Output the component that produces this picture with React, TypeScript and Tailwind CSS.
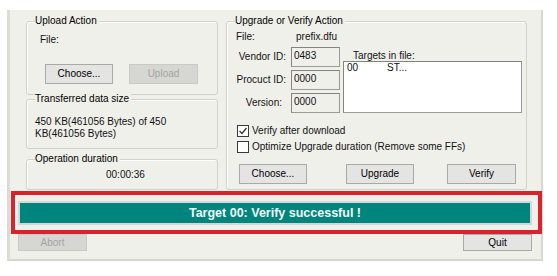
import React from "react";

function Group({ title, className, children }: { title: string; className: string; children?: React.ReactNode }) {
  return (
    <div className={"relative border border-[#d2d2c8] rounded-[3px] shadow-[inset_1px_1px_0_#ffffff] " + className}>
      <span className="absolute left-[8px] top-[-7px] bg-[#f0f0eb] pr-[2px] leading-[12px] text-black">{title}</span>
      {children}
    </div>
  );
}

function Btn({ label, w, disabled }: { label: string; w: string; disabled?: boolean }) {
  return (
    <div
      className={
        "flex items-center justify-center h-[20px] leading-[12px] border " +
        w +
        (disabled
          ? " bg-[#d6d6d3] border-[#c9c9c6] text-[#a4a4a4]"
          : " bg-[#e4e4e2] border-[#a9a9a7] text-black")
      }
    >
      {label}
    </div>
  );
}

function Field({ value }: { value: string }) {
  return (
    <div className="w-[49px] h-[20px] border border-[#9a9a96] border-t-[#848480] border-l-[#848480] bg-[#f0f0eb] pl-[2px] pt-[2px] leading-[12px]">
      {value}
    </div>
  );
}

function Check({ checked }: { checked?: boolean }) {
  return (
    <div className="w-[12px] h-[12px] border border-[#3a3a3a] bg-white flex items-center justify-center">
      {checked && (
        <svg width="10" height="10" viewBox="0 0 10 10">
          <polyline points="1.5,5 4,7.5 8.5,2" fill="none" stroke="#333" strokeWidth="1.3" />
        </svg>
      )}
    </div>
  );
}

export default function App() {
  return (
    <div className="w-[557px] h-[276px] bg-white overflow-hidden pt-[10px] font-['Liberation_Sans',Arial,sans-serif] text-[10px] text-[#111]">
      <div className="relative ml-[7px] w-[536px] h-[251px] bg-[#f0f0eb] border-l-[3px] border-l-[#dcdcd4] border-r-[2px] border-r-[#d8d8d0] border-b-[2px] border-b-[#d6d6ce] pt-[11px] pl-[8px] pr-[9px] pb-[8px]">
        <div className="flex ml-[8px] gap-[8px] h-[169px]">
          <div className="flex flex-col w-[192px]">
            <Group title="Upload Action" className="h-[74px]">
              <div className="pt-[12px] pl-[13px] leading-[12px]">File:</div>
              <div className="mt-[18px] ml-[18px] flex gap-[16px]">
                <Btn label="Choose..." w="w-[68px]" />
                <Btn label="Upload" w="w-[69px]" disabled />
              </div>
            </Group>
            <Group title="Transferred data size" className="h-[50px] mt-[4px]">
              <div className="pt-[16px] pl-[8px] leading-[12px]">
                450 KB(461056 Bytes) of 450
                <br />
                KB(461056 Bytes)
              </div>
            </Group>
            <Group title="Operation duration" className="h-[31px] mt-[10px]">
              <div className="pt-[9px] pl-[79px] leading-[12px]">00:00:36</div>
            </Group>
          </div>
          <Group title="Upgrade or Verify Action" className="w-[301px] h-[169px]">
            <div className="pt-[9px] pl-[9px] flex leading-[12px]">
              <span className="w-[60px]">File:</span>
              <span>prefix.dfu</span>
            </div>
            <div className="mt-[4px] flex">
              <div className="flex">
                <div className="w-[64px] flex flex-col gap-[3px] text-right">
                  <div className="h-[20px] leading-[20px] pr-[5px]">Vendor ID:</div>
                  <div className="h-[20px] leading-[20px] pr-[5px]">Procuct ID:</div>
                  <div className="h-[20px] leading-[20px] pr-[9px]">Version:</div>
                </div>
                <div className="flex flex-col gap-[3px]">
                  <Field value="0483" />
                  <Field value="0000" />
                  <Field value="0000" />
                </div>
              </div>
              <div className="ml-[3px] flex flex-col">
                <div className="mt-[3px] h-[11px] leading-[11px] pl-[10px]">Targets in file:</div>
                <div className="w-[179px] h-[52px] bg-white border border-[#9a9a96] border-t-[#848480] border-l-[#848480] pl-[3px] leading-[12px] flex">
                  <span className="w-[40px]">00</span>
                  <span>ST...</span>
                </div>
              </div>
            </div>
            <div className="mt-[12px] pl-[10px] flex items-center gap-[3px] h-[12px] leading-[12px]">
              <Check checked />
              <span>Verify after download</span>
            </div>
            <div className="mt-[4px] pl-[10px] flex items-center gap-[3px] h-[12px] leading-[12px]">
              <Check />
              <span>Optimize Upgrade duration (Remove some FFs)</span>
            </div>
            <div className="mt-[11px] pl-[12px] flex">
              <Btn label="Choose..." w="w-[68px]" />
              <div className="ml-[39px]">
                <Btn label="Upgrade" w="w-[68px]" />
              </div>
              <div className="ml-[33px]">
                <Btn label="Verify" w="w-[69px]" />
              </div>
            </div>
          </Group>
        </div>
        <div className="mt-[11px] h-[24px] border-2 border-[#d3d8d6] bg-[#00857e] flex items-center justify-center text-[12.5px] font-bold text-[#f2fbfa] leading-[14px]">
          Target 00: Verify successful !
        </div>
        <div className="mt-[9px] flex justify-between">
          <div className="flex items-center justify-center w-[69px] h-[17px] bg-[#d6d6d3] border border-[#c9c9c6] text-[#a4a4a4] leading-[12px]">
            Abort
          </div>
          <div className="flex items-center justify-center w-[69px] h-[17px] bg-[#e4e4e2] border border-[#a9a9a7] text-black leading-[12px]">
            Quit
          </div>
        </div>
        <div className="absolute left-[1px] top-[181px] w-[531px] h-[43px] border-[4px] border-[#d8232c] pointer-events-none" />
      </div>
    </div>
  );
}
